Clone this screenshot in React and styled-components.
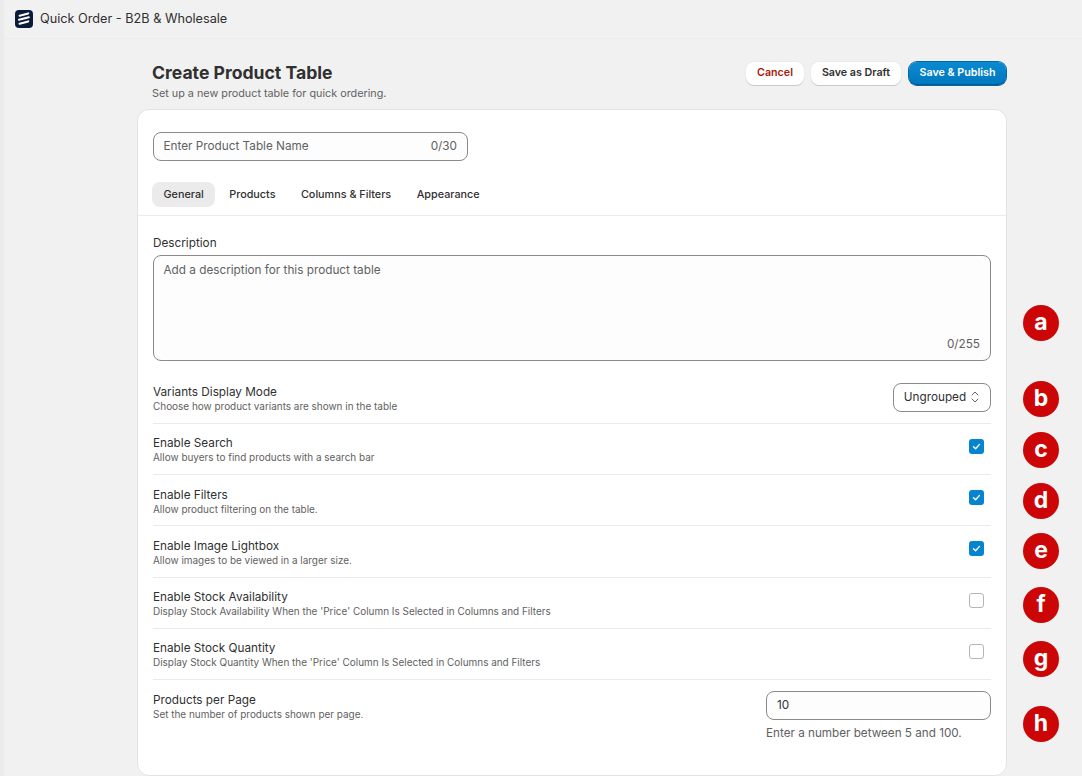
import React from 'react';
import styled, { createGlobalStyle } from 'styled-components';

const GlobalStyle = createGlobalStyle`
  html, body {
    margin: 0;
    padding: 0;
    background: #f1f1f1;
    font-family: Inter, "Noto Sans", sans-serif;
    color: #303030;
    overflow: hidden;
  }
`;

const Page = styled.div`
  position: relative;
  width: 1082px;
  height: 776px;
  overflow: hidden;
  border-left: 4px solid #ebebeb;
  box-sizing: border-box;
`;

const AppBar = styled.header`
  height: 38px;
  display: flex;
  align-items: center;
  gap: 7px;
  padding-left: 11px;
  border-bottom: 1px solid #ebebeb;
  background: #f1f1f1;
`;

const AppName = styled.span`
  font-size: 12.7px;
  padding-bottom: 1px;
  color: #303030;
`;

const Main = styled.main`
  width: 870px;
  margin-left: 133px;
`;

const TitleBar = styled.div`
  display: flex;
  justify-content: space-between;
  align-items: flex-start;
  height: 70px;
  padding: 22px 0 0 15px;
  box-sizing: border-box;
`;

const Title = styled.h1`
  margin: 0;
  font-size: 17.6px;
  line-height: 24px;
  font-weight: 700;
  color: #303030;
`;

const Subtitle = styled.p`
  margin: 1px 0 0;
  font-size: 10.8px;
  line-height: 16px;
  color: #616161;
`;

const Actions = styled.div`
  display: flex;
  gap: 7px;
  margin: 1px 1px 0 0;
`;

const Button = styled.button`
  width: ${(p) => p.$width}px;
  height: 23px;
  padding: 0 0 2px;
  border: 0;
  border-radius: 8px;
  background: #fff;
  font: 600 10.7px Inter, sans-serif;
  color: ${(p) => (p.$danger ? '#a81a0c' : '#303030')};
  box-shadow: 0 1px 0 #c9c9c9, 0 0 0 1px #ebebeb;
`;

const PrimaryButton = styled(Button)`
  margin-left: 1px;
  background: linear-gradient(#0a8ad2, #0077bd);
  color: #fff;
  box-shadow: inset 0 -1px 0 #00588f, 0 0 0 1px #0268a6;
`;

const Card = styled.section`
  height: 667px;
  background: #fff;
  border: 1px solid #e3e3e3;
  border-radius: 12px;
  box-sizing: border-box;
`;

const NameField = styled.div`
  width: 315px;
  height: 29px;
  margin: 22px 0 0 15px;
  padding: 0 10px 1px 9.5px;
  display: flex;
  justify-content: space-between;
  align-items: center;
  box-sizing: border-box;
  border: 1px solid #8a8a8a;
  border-radius: 8px;
  background: #fdfdfd;
  font-size: 11.75px;
  color: #616161;
`;

const Tabs = styled.nav`
  display: flex;
  gap: 2.5px;
  height: 33px;
  margin-top: 21px;
  padding-left: 14px;
  border-bottom: 1px solid #ebebeb;
`;

const Tab = styled.div`
  height: 25px;
  padding: 0 11.5px 1px;
  display: flex;
  align-items: center;
  box-sizing: border-box;
  border-radius: 8px;
  font-size: 10.8px;
  font-weight: 500;
  color: #303030;
  background: ${(p) => (p.$active ? '#ebebeb' : 'transparent')};
`;

const Body = styled.div`
  padding: 17px 15px 0;
`;

const FieldLabel = styled.div`
  font-size: 11.75px;
  line-height: 20px;
  color: #303030;
`;

const TextArea = styled.div`
  position: relative;
  height: 106px;
  margin: 2px 0 11.7px;
  padding: 6px 9.5px;
  box-sizing: border-box;
  border: 1px solid #8a8a8a;
  border-radius: 8px;
  background: #fdfdfd;
  font-size: 11.75px;
  line-height: 16px;
  color: #616161;
`;

const Counter = styled.span`
  position: absolute;
  right: 10px;
  bottom: 8px;
  font-size: 11.75px;
  line-height: 16px;
  color: #616161;
`;

const Row = styled.div`
  display: flex;
  justify-content: space-between;
  height: ${(p) => p.$height || 51.25}px;
  box-sizing: border-box;
  padding-top: ${(p) => (p.$last ? 12 : 11.5)}px;
  border-bottom: ${(p) => (p.$last ? '0' : '1px solid #ebebeb')};
`;

const RowLabel = styled.div`
  font-size: 11.75px;
  line-height: 16px;
  color: #303030;
`;

const RowHint = styled.div`
  font-size: 9.95px;
  line-height: 13px;
  color: #616161;
`;

const Select = styled.div`
  width: 98px;
  height: 29px;
  margin-top: -1.5px;
  display: flex;
  align-items: center;
  justify-content: center;
  gap: 4px;
  box-sizing: border-box;
  border: 1px solid #8a8a8a;
  border-radius: 8px;
  font-size: 11.75px;
  color: #303030;
`;

const Check = styled.span`
  width: 15px;
  height: 15px;
  margin: 3.5px 7px 0 0;
  display: flex;
  align-items: center;
  justify-content: center;
  box-sizing: border-box;
  border-radius: 3px;
  border: ${(p) => (p.$on ? '0' : '1px solid #b5b5b5')};
  background: ${(p) => (p.$on ? '#0784cf' : '#fff')};
`;

const PerPage = styled.div`
  width: 225px;
  margin-top: -1.5px;
`;

const NumberInput = styled.div`
  height: 29px;
  padding: 0 10px 1px;
  display: flex;
  align-items: center;
  box-sizing: border-box;
  border: 1px solid #8a8a8a;
  border-radius: 8px;
  background: #fdfdfd;
  font-size: 11.75px;
  color: #303030;
`;

const Help = styled.div`
  margin-top: 5px;
  font-size: 11.7px;
  line-height: 16px;
  color: #616161;
`;

const Badge = styled.span`
  position: absolute;
  left: 1019px;
  top: ${(p) => p.$top}px;
  width: 36px;
  height: 36px;
  padding-bottom: 1px;
  display: flex;
  align-items: center;
  justify-content: center;
  box-sizing: border-box;
  border-radius: 50%;
  background: #cc0606;
  color: #fff;
  font-size: 23px;
  font-weight: 700;
  line-height: 35px;
`;

const Logo = () => (
  <svg width="18" height="18" viewBox="0 0 18 18">
    <rect width="18" height="18" rx="4" fill="#0b1b3a" />
    <path d="M4.6 5.8 13.2 3.4M4 9.8 13.8 7.2M4.6 13.8 13.2 11.4" stroke="#fff" strokeWidth="2.1" strokeLinecap="round" fill="none" />
  </svg>
);

const Chevrons = () => (
  <svg width="10" height="14" viewBox="0 0 10 14" fill="none" stroke="#616161" strokeWidth="1" strokeLinecap="round" strokeLinejoin="round">
    <path d="M2 5 5 2l3 3M2 9l3 3 3-3" />
  </svg>
);

const Tick = () => (
  <svg width="11" height="11" viewBox="0 0 11 11" fill="none" stroke="#fff" strokeWidth="1.4" strokeLinecap="round" strokeLinejoin="round">
    <path d="M2.5 5.8 4.6 7.8 8.5 3.4" />
  </svg>
);

const toggles = [
  { label: 'Enable Search', hint: 'Allow buyers to find products with a search bar', on: true },
  { label: 'Enable Filters', hint: 'Allow product filtering on the table.', on: true },
  { label: 'Enable Image Lightbox', hint: 'Allow images to be viewed in a larger size.', on: true },
  { label: 'Enable Stock Availability', hint: "Display Stock Availability When the 'Price' Column Is Selected in Columns and Filters", on: false },
  { label: 'Enable Stock Quantity', hint: "Display Stock Quantity When the 'Price' Column Is Selected in Columns and Filters", on: false },
];

const badges = [
  ['a', 305], ['b', 381], ['c', 432], ['d', 483], ['e', 533], ['f', 587], ['g', 641], ['h', 706],
];

export default function App() {
  return (
    <Page>
      <GlobalStyle />
      <AppBar>
        <Logo />
        <AppName>Quick Order - B2B &amp; Wholesale</AppName>
      </AppBar>
      <Main>
        <TitleBar>
          <div>
            <Title>Create Product Table</Title>
            <Subtitle>Set up a new product table for quick ordering.</Subtitle>
          </div>
          <Actions>
            <Button $danger $width={58}>Cancel</Button>
            <Button $width={90}>Save as Draft</Button>
            <PrimaryButton $width={97}>Save &amp; Publish</PrimaryButton>
          </Actions>
        </TitleBar>
        <Card>
          <NameField>
            <span>Enter Product Table Name</span>
            <span>0/30</span>
          </NameField>
          <Tabs>
            <Tab $active>General</Tab>
            <Tab>Products</Tab>
            <Tab>Columns &amp; Filters</Tab>
            <Tab>Appearance</Tab>
          </Tabs>
          <Body>
            <FieldLabel>Description</FieldLabel>
            <TextArea>
              Add a description for this product table
              <Counter>0/255</Counter>
            </TextArea>
            <Row>
              <div>
                <RowLabel>Variants Display Mode</RowLabel>
                <RowHint>Choose how product variants are shown in the table</RowHint>
              </div>
              <Select>
                Ungrouped <Chevrons />
              </Select>
            </Row>
            {toggles.map((t) => (
              <Row key={t.label}>
                <div>
                  <RowLabel>{t.label}</RowLabel>
                  <RowHint>{t.hint}</RowHint>
                </div>
                <Check $on={t.on}>{t.on && <Tick />}</Check>
              </Row>
            ))}
            <Row $last $height={80}>
              <div>
                <RowLabel>Products per Page</RowLabel>
                <RowHint>Set the number of products shown per page.</RowHint>
              </div>
              <PerPage>
                <NumberInput>10</NumberInput>
                <Help>Enter a number between 5 and 100.</Help>
              </PerPage>
            </Row>
          </Body>
        </Card>
      </Main>
      {badges.map(([letter, top]) => (
        <Badge key={letter} $top={top}>{letter}</Badge>
      ))}
    </Page>
  );
}
